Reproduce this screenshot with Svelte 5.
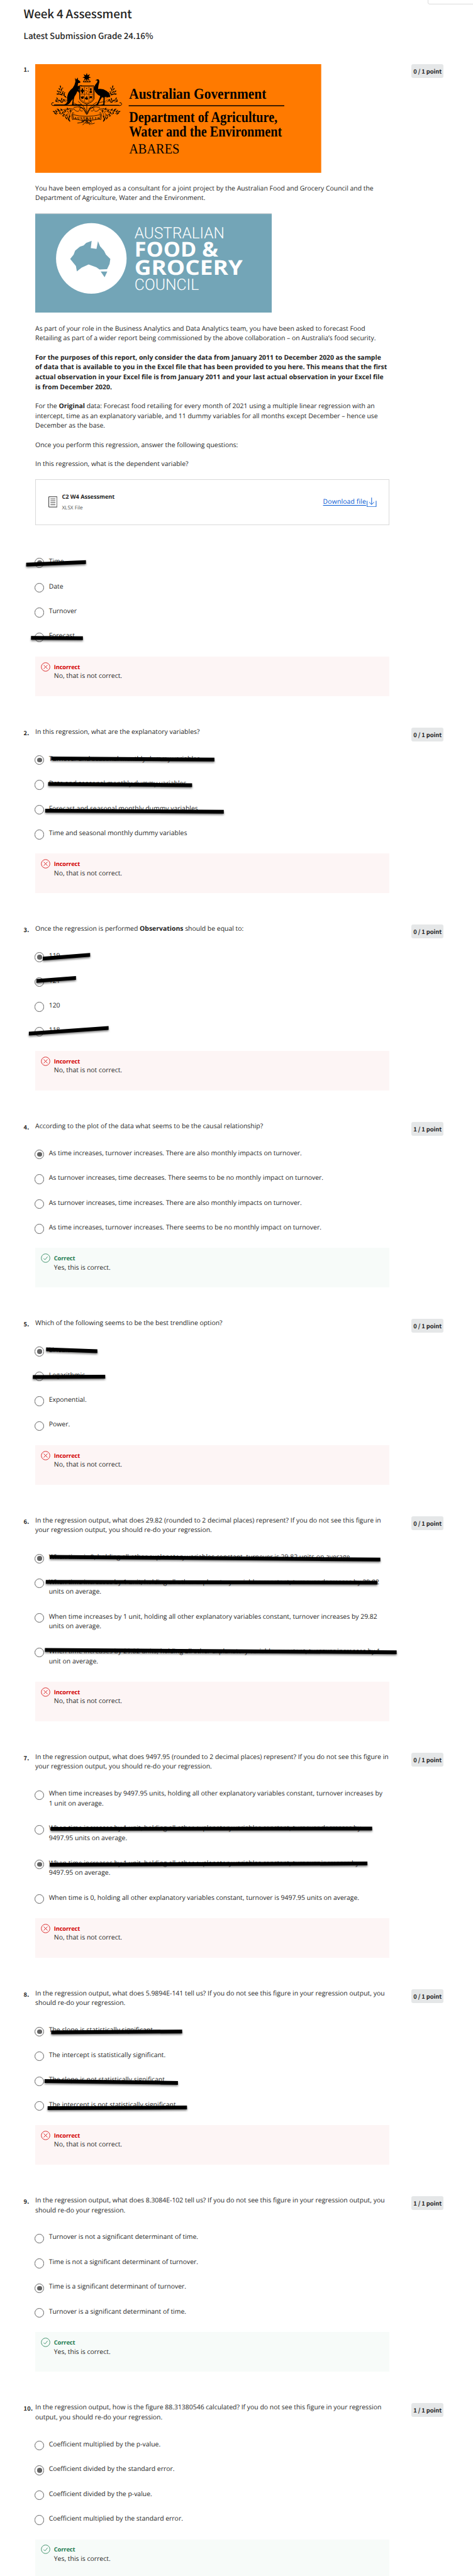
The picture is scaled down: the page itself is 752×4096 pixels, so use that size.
<script>
  const questions = [
    {
      n: 1, score: 0, intro: true,
      options: [
        { t: ['Time'], on: true, m: [-14.4, 8.7, 80.6, 4.7] },
        { t: ['Date'] },
        { t: ['Turnover'] },
        { t: ['Forecast'], m: [-6.7, 7.2, 75.8, 7.8] },
      ],
    },
    {
      n: 2, score: 0,
      q: ['In this regression, what are the explanatory variables?'],
      options: [
        { t: ['Turnover and seasonal monthly dummy variables'], on: true, m: [25.4, 3, 284.9, 4.8] },
        { t: ['Date and seasonal monthly dummy variables'], m: [20.6, 4.6, 249.4, 6.4] },
        { t: ['Forecast and seasonal monthly dummy variables'], m: [15.8, 6.9, 299.8, 8.7] },
        { t: ['Time and seasonal monthly dummy variables'] },
      ],
    },
    {
      n: 3, score: 0,
      q: ['Once the regression is performed <b>Observations</b> should be equal to:'],
      options: [
        { t: ['119'], on: true, m: [12, 8.2, 87.3, 2.2] },
        { t: ['121'], m: [1.9, 3.8, 64.8, -1] },
        { t: ['120'] },
        { t: ['118'], m: [-10.1, 9.5, 116.6, 0.6] },
      ],
    },
    {
      n: 4, score: 1,
      q: ['According to the plot of the data what seems to be the causal relationship?'],
      options: [
        { t: ['As time increases, turnover increases. There are also monthly impacts on turnover.'], on: true },
        { t: ['As turnover increases, time decreases. There seems to be no monthly impact on turnover.'] },
        { t: ['As turnover increases, time increases. There are also monthly impacts on turnover.'] },
        { t: ['As time increases, turnover increases. There seems to be no monthly impact on turnover.'] },
      ],
    },
    {
      n: 5, score: 0,
      q: ['Which of the following seems to be the best trendline option?'],
      options: [
        { t: ['Linear.'], on: true, m: [17.3, 2.6, 98.8, 5.5] },
        { t: ['Logarithmic.'], m: [-3.8, 6.5, 111.3, 5.9] },
        { t: ['Exponential.'] },
        { t: ['Power.'] },
      ],
    },
    {
      n: 6, score: 0,
      q: ['In the regression output, what does 29.82 (rounded to 2 decimal places) represent? If you do not see this figure in', 'your regression output, you should re-do your regression.'],
      options: [
        { t: ['When time is 0, holding all other explanatory variables constant, turnover is 29.82 units on average.'], on: true, m: [23, 3.5, 548.7, 7.7] },
        { t: ['When time increases by 1 unit, holding all other explanatory variables constant, turnover decreases by 29.82', 'units on average.'], m: [16.8, 3.3, 543.9, 4.5] },
        { t: ['When time increases by 1 unit, holding all other explanatory variables constant, turnover increases by 29.82', 'units on average.'] },
        { t: ['When time increases by 29.82 units, holding all other explanatory variables constant, turnover increases by 1', 'unit on average.'], m: [15.4, 1.5, 574.6, 5.2] },
      ],
    },
    {
      n: 7, score: 0,
      q: ['In the regression output, what does 9497.95 (rounded to 2 decimal places) represent? If you do not see this figure in', 'your regression output, you should re-do your regression.'],
      options: [
        { t: ['When time increases by 9497.95 units, holding all other explanatory variables constant, turnover increases by', '1 unit on average.'] },
        { t: ['When time increases by 1 unit, holding all other explanatory variables constant, turnover decreases by', '9497.95 units on average.'], m: [24.5, 5, 535.7, 4.5] },
        { t: ['When time increases by 1 unit, holding all other explanatory variables constant, turnover increases by', '9497.95 on average.'], on: true, m: [23, 5.9, 528.1, 4.1] },
        { t: ['When time is 0, holding all other explanatory variables constant, turnover is 9497.95 units on average.'] },
      ],
    },
    {
      n: 8, score: 0,
      q: ['In the regression output, what does 5.9894E-141 tell us? If you do not see this figure in your regression output, you', 'should re-do your regression.'],
      options: [
        { t: ['The slope is statistically significant.'], on: true, m: [25.4, 7.5, 233.6, 6.2] },
        { t: ['The intercept is statistically significant.'] },
        { t: ['The slope is not statistically significant.'], m: [14.9, 6, 226.9, 8.9] },
        { t: ['The intercept is not statistically significant.'], m: [19.7, 9.1, 241.3, 8] },
      ],
    },
    {
      n: 9, score: 1,
      q: ['In the regression output, what does 8.3084E-102 tell us? If you do not see this figure in your regression output, you', 'should re-do your regression.'],
      options: [
        { t: ['Turnover is not a significant determinant of time.'] },
        { t: ['Time is not a significant determinant of turnover.'] },
        { t: ['Time is a significant determinant of turnover.'], on: true },
        { t: ['Turnover is a significant determinant of time.'] },
      ],
    },
    {
      n: 10, score: 1,
      q: ['In the regression output, how is the figure 88.31380546 calculated? If you do not see this figure in your regression', 'output, you should re-do your regression.'],
      options: [
        { t: ['Coefficient multiplied by the p-value.'] },
        { t: ['Coefficient divided by the standard error.'], on: true },
        { t: ['Coefficient divided by the p-value.'] },
        { t: ['Coefficient multiplied by the standard error.'] },
      ],
    },
  ];

  // Wattle sprigs of the crest: [x, y, angle] for each leaf.
  const leaves = [
    [94, 122, 80], [86, 142, 60], [102, 146, 110], [74, 160, 30], [92, 166, 50], [72, 182, 10], [110, 176, 130], [100, 186, 20], [124, 184, 100], [132, 202, 40],
    [68, 218, 60], [84, 232, 20], [62, 240, 20], [104, 222, 100], [122, 228, 30], [104, 246, 10],
    [42, 322, 20], [62, 324, 110], [52, 336, 30], [80, 312, 70], [74, 304, 20], [90, 332, 110], [102, 306, 40], [112, 330, 120], [122, 344, 30], [132, 318, 60], [140, 352, 110], [152, 300, 60], [118, 356, 10], [142, 376, 50], [160, 382, 80], [168, 362, 110], [176, 318, 100], [166, 394, 60],
  ];
  const berries = [[112, 134], [80, 174], [88, 182], [116, 162], [128, 170], [60, 228], [76, 244], [94, 240], [114, 238], [56, 312], [68, 336], [86, 318], [98, 340], [126, 330], [136, 366], [152, 368], [150, 320], [60, 342]];
</script>

{#snippet sprigs()}
  {#each leaves as [x, y, a]}
    <ellipse cx={x} cy={y} rx="10" ry="4" transform="rotate({a} {x} {y})" />
  {/each}
  {#each berries as [x, y]}
    <circle cx={x} cy={y} r="4" />
  {/each}
  <g fill="none" stroke="#000" stroke-width="3">
    <path d="M70 180Q115 180 150 215M94 120Q98 165 132 200M55 232Q95 225 145 245M110 240Q135 222 150 232" />
    <path d="M40 322Q90 318 118 308T205 300M100 345Q125 310 175 296M160 395Q135 330 185 300M165 385Q160 330 196 304" />
  </g>
{/snippet}

{#snippet intro()}
  <svg class="gov" viewBox="0 0 454.7 172.8">
    <rect width="454.7" height="172.8" fill="#ff7a00" />
    <g transform="translate(21.4 11.5) scale(.1986)">
      <path d="M305 13l6 19 19-9-10 18 19 8-20 5 8 18-17-9-6 14-6-14-16 9 7-18-19-5 19-8-10-18 19 9z" />
      <rect x="275" y="75" width="60" height="12" rx="4" />
      <path d="M282 81h10m6 0h10m6 0h12" stroke="#ff7a00" stroke-width="4" />
      <path d="M211 51l9 14 13-16 1 18q17 8 21 18-3 9-18 8-6 12-4 26l12-6q18-6 28 3l-24 6-8 24 10 20 12 22-6 4-20-30-8-2q-5 18-22 42-8 22-9 48l1 14h64v5h-78l4-14 4-34-12 14q-14 28-40 36H44v-5h80q22-10 25-26-4-50 12-74 16-22 32-34 16-20 21-50-4-22-3-51z" />
      <path d="M372 76q10-15 24-13 12 6 9 24-8 26-10 54 36-6 70 16 24 18 28 50l-20-2-24 0-2 62 6 5h-34v-4l18-5 2-52-12-4-18 30-14 34-8 2h-18v-4l14-3 22-44 8-24q-18-4-28-20-16-12-20-34 0-30 14-44 12-8 12-24l-9-4z" />
      <path d="M247 116h116v104q-8 24-58 42-50-18-58-42z" fill="#ff7a00" stroke="#000" stroke-width="5" />
      <path d="M254 123h102v94q-8 18-51 36-43-18-51-36zM254 184h102M287 123v118M322 123v118" fill="none" stroke="#000" stroke-width="2.5" />
      <path d="M256 150h28v12h-28zM264 136h12v40h-12zM330 136h14v10h-14zM328 160h18v12h-18zM334 142h8v24h-8zM300 134h8v6h-8zM296 150h6v6h-6zM306 156h6v6h-6zM299 170h8v6h-8z" />
      <path d="M258 198q10 12 14-2 12 2 8 18-12 14-22-2zM290 208q10 10 12-8 8-10 6 8 8 2 6 16-18 8-24-8zM328 196l10 4 12-4-4 12 6 8-14-2-12 4 2-12z" />
      <g fill="none" stroke="#000">
        <path d="M42 272h522" stroke-width="7" />
        <path d="M44 274q-20 2-22-12 2-15 18-11M562 274q22 0 23-12-2-15-18-11" stroke-width="5" />
        <path d="M305 262v86M297 340q-10-42-54-62-32-28-56-28M312 340q10-42 54-62 40-40 90-34M300 330q-30-60-100-42M310 330q30-60 100-42M306 345q-10-60-70-105M306 345q12-60 80-100M290 300q-36-20-42 2 4 20 24 14M320 300q36-20 42 2-4 20-24 14M200 300q30 34 46 12M410 300q-30 34-46 12" stroke-width="4" />
        <path d="M192 346q110 28 224 0l-8 34q-104 28-208 0zM192 346q-10-24 12-10M416 346q10-24-12-10M184 344l6 42 14-4M424 344l-6 42-14-4" stroke-width="4" />
        <path d="M294 382l-30 28M316 382l30 28M300 380v40M310 380v40M230 414q34-2 50-14 18-18 36 6t52 8M272 428l30-26 30 26M274 386q-20 20 10 20M332 386q20 20-10 20" stroke-width="4.5" />
      </g>
      {@render sprigs()}
      <g transform="translate(607 0) scale(-1 1)">{@render sprigs()}</g>
      <text class="serif" x="203" y="383" font-size="29" font-weight="700" textLength="202">AUSTRALIA</text>
    </g>
    <g class="serif" font-weight="700" font-size="24">
      <text x="149.2" y="55.2" textLength="218.2" lengthAdjust="spacingAndGlyphs">Australian Government</text>
      <text x="149.2" y="91.6" textLength="236" lengthAdjust="spacingAndGlyphs">Department of Agriculture,</text>
      <text x="149.2" y="115.2" textLength="243" lengthAdjust="spacingAndGlyphs">Water and the Environment</text>
      <text x="149.2" y="142.2" font-weight="400" font-size="22.4" textLength="80.2" lengthAdjust="spacingAndGlyphs">ABARES</text>
    </g>
    <rect x="148.6" y="65.4" width="247.4" height="1.5" />
  </svg>
  <p class="lead">You have been employed as a consultant for a joint project by the Australian Food and Grocery Council and the<br />Department of Agriculture, Water and the Environment.</p>
  <svg class="afgc" viewBox="0 0 376 158.3">
    <rect width="376" height="158.3" fill="#73a5b7" />
    <rect width="376" height="1.2" fill="#cfd3d6" />
    <circle cx="89.2" cy="71.9" r="56.1" fill="#fff" />
    <path d="M55.6 72.7L61 66l2.5-6.5L71 53.3l6-2 4-4 8.7-3.4-1.4 11.6 9.1 1.3 2.4-12.2 3.2 8 6.4 7.1 3 6 7 7-1.2 8-4 8.4-12 .4-5-3.5-12.3-4.6-11 5-7.7 6-1.5-8.5z" fill="#73a5b7" />
    <path d="M104.1 92.7h10.5l-4.3 9z" fill="#73a5b7" />
    <g fill="#fff">
      <text class="thin" x="157.8" y="39.7" font-size="25" textLength="143" lengthAdjust="spacingAndGlyphs">AUSTRALIAN</text>
      <text class="heavy" x="157.8" y="69.1" font-size="32.6" textLength="133" lengthAdjust="spacingAndGlyphs">FOOD &amp;</text>
      <text class="heavy" x="157.8" y="98.1" font-size="32.6" textLength="172" lengthAdjust="spacingAndGlyphs">GROCERY</text>
      <text class="thin" x="157.8" y="122.4" font-size="25" textLength="102.5" lengthAdjust="spacingAndGlyphs">COUNCIL</text>
    </g>
  </svg>
  <div class="prose">
    <p>As part of your role in the Business Analytics and Data Analytics team, you have been asked to forecast Food<br />Retailing as part of a wider report being commissioned by the above collaboration – on Australia’s food security.</p>
    <p><b>For the purposes of this report, only consider the data from January 2011 to December 2020 as the sample<br />of data that is available to you in the Excel file that has been provided to you here. This means that the first<br />actual observation in your Excel file is from January 2011 and your last actual observation in your Excel file<br />is from December 2020.</b></p>
    <p>For the <b>Original</b> data: Forecast food retailing for every month of 2021 using a multiple linear regression with an<br />intercept, time as an explanatory variable, and 11 dummy variables for all months except December – hence use<br />December as the base.</p>
    <p>Once you perform this regression, answer the following questions:</p>
    <p>In this regression, what is the dependent variable?</p>
  </div>
  <div class="file">
    <svg class="doc" viewBox="0 0 14.4 18"><path d="M.6.8h13.2v16.4H.6z" fill="none" stroke="#333" stroke-width="1" /><path d="M3.3 4.3h7.8M3.3 7.4h7.8M3.3 10.5h7.8M3.3 13.6h7.8" stroke="#333" stroke-width=".9" /></svg>
    <div class="meta"><strong>C2 W4 Assessment</strong><span>XLSX File</span></div>
    <a href="#download">Download file</a>
    <svg class="dl" viewBox="0 0 15.6 15.6"><path d="M.6 5.3v9.5h14.4V5.3M7.8.2v10.7M3.9 7.4l3.9 3.9 3.9-3.9" fill="none" stroke="#0056d2" stroke-width=".95" /></svg>
  </div>
{/snippet}

<main>
  <div class="popup"></div>
  <header>
    <h1>Week 4 Assessment</h1>
    <h2>Latest Submission Grade 24.16%</h2>
  </header>

  {#each questions as item}
    <section>
      <div class="num">{item.n}.</div>
      <div class="body">
        {#if item.intro}
          {@render intro()}
        {:else}
          <p>{#each item.q as line, i}{#if i}<br />{/if}{@html line}{/each}</p>
        {/if}
        <ul class:first={item.intro}>
          {#each item.options as o}
            <li>
              <span class="radio" class:on={o.on}></span>
              <span>{#each o.t as line, i}{#if i}<br />{/if}{line}{/each}</span>
              {#if o.m}
                <svg class="strike" width="10" height="10">
                  <polygon points="{o.m[0]},{o.m[1]} {o.m[2]},{o.m[3]} {o.m[2]},{o.m[3] + 6} {o.m[0]},{o.m[1] + 6}" />
                </svg>
              {/if}
            </li>
          {/each}
        </ul>
        <div class="feedback" class:good={item.score}>
          <svg viewBox="0 0 15 15" fill="none" stroke="currentColor" stroke-width=".8">
            <circle cx="7.5" cy="7.5" r="6.8" />
            {#if item.score}
              <path d="M4.3 7.9l2.2 2.2 4.1-4.9" />
            {:else}
              <path d="M4.5 4.5l6 6M10.5 4.5l-6 6" />
            {/if}
          </svg>
          <div>
            <strong>{item.score ? 'Correct' : 'Incorrect'}</strong>
            <p>{item.score ? 'Yes, this is correct.' : 'No, that is not correct.'}</p>
          </div>
        </div>
      </div>
      <div class="badge">{item.score} / 1 point</div>
    </section>
  {/each}
</main>

<style>
  :global(body) { margin: 0; background: #fff; }
  main {
    position: relative;
    box-sizing: border-box;
    width: 752px;
    height: 4096px;
    overflow: hidden;
    padding: 10.2px 0 0 37.5px;
    background: #fff;
    color: #1f1f1f;
    font: 10.43px/15.64px 'Open Sans', sans-serif;
    text-rendering: geometricPrecision;
    white-space: nowrap;
  }
  .popup {
    position: absolute;
    top: -10px;
    right: -10px;
    width: 80px;
    height: 14.8px;
    border: 1px solid #dcdcdc;
    border-radius: 3px;
  }
  h1, h2, p, ul { margin: 0; padding: 0; font-weight: 400; }
  h1, h2, .num, .badge { font-family: 'Noto Sans CJK SC', sans-serif; }
  h1 { font-size: 18.8px; line-height: 24px; font-weight: 500; letter-spacing: -.13px; }
  h2 { margin-top: 12.7px; font-size: 13.4px; line-height: 18px; font-weight: 500; letter-spacing: -.07px; }
  header { margin-bottom: 36.85px; }
  section {
    display: grid;
    grid-template-columns: 18.6px 562.9px 50.9px;
    align-items: start;
    margin-bottom: 49.95px;
  }
  .num { padding-top: 1.3px; font-size: 9.3px; font-weight: 700; letter-spacing: .3px; }
  .badge {
    margin-left: 35.2px;
    width: 50.9px;
    height: 22.3px;
    border-radius: 3px;
    background: #e5e7e8;
    font-size: 9.3px;
    line-height: 22.3px;
    font-weight: 700;
    letter-spacing: -.05px;
    text-align: center;
  }
  b { font-weight: 700; }
  .gov, .afgc { display: block; }
  .gov { width: 454.7px; height: 172.8px; }
  .afgc { width: 376px; height: 158.3px; }
  .serif { font-family: 'Liberation Serif', serif; }
  .thin { font-family: Roboto, sans-serif; font-weight: 300; }
  .heavy { font-family: 'Open Sans', sans-serif; font-weight: 700; }
  .lead { margin: 18.2px 0 15.2px; }
  .prose { display: flex; flex-direction: column; gap: 14.8px; margin: 18.1px 0 15.3px; }
  .file {
    box-sizing: border-box;
    display: flex;
    align-items: center;
    height: 72.7px;
    padding: 0 19px 0 19.6px;
    border: 1px solid #dadada;
  }
  .doc { width: 14.4px; height: 18px; }
  .meta { display: flex; flex-direction: column; flex: 1; margin-left: 7.3px; }
  .meta strong { font-size: 9.15px; line-height: 18px; }
  .meta span { font-size: 8.2px; line-height: 17px; color: #555; }
  .file a { margin-right: 1.4px; color: #0056d2; letter-spacing: .13px; text-decoration: underline; text-underline-offset: 1.5px; }
  .dl { width: 15.6px; height: 15.6px; }
  ul { display: flex; flex-direction: column; gap: 23.83px; margin: 27.26px 0 23.83px; list-style: none; }
  ul.first { margin-top: 51.3px; }
  li { position: relative; display: flex; align-items: flex-start; gap: 7.4px; }
  .radio {
    box-sizing: border-box;
    display: grid;
    place-items: center;
    flex: none;
    width: 15.2px;
    height: 15.2px;
    margin: 1.4px -.2px -2px -.8px;
    border: 1.5px solid #636363;
    border-radius: 50%;
  }
  .radio.on::before { content: ''; width: 7.5px; height: 7.5px; border-radius: 50%; background: #636363; }
  .strike {
    position: absolute;
    top: 0;
    left: 0;
    overflow: visible;
    filter: drop-shadow(0 2.5px 1.5px rgba(0, 0, 0, .5));
  }
  .feedback {
    box-sizing: border-box;
    display: flex;
    gap: 6.1px;
    height: 62.8px;
    padding: 8.6px;
    background: #fdf5f5;
    color: #d30001;
  }
  .feedback.good { background: #f7fbf9; color: #1d7c50; }
  .feedback svg { width: 15px; height: 15px; }
  .feedback strong { display: block; font-size: 9.3px; line-height: 15.64px; letter-spacing: -.13px; }
  .feedback p { color: #1f1f1f; }
</style>
